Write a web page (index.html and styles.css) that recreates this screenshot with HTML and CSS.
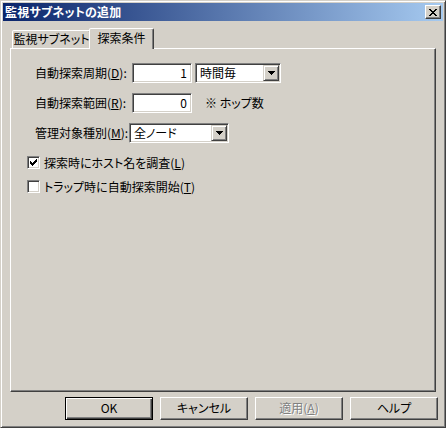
FILE: index.html
```html
<!DOCTYPE html>
<html lang="ja">
<head>
<meta charset="utf-8">
<title>監視サブネットの追加</title>
<link rel="stylesheet" href="styles.css">
</head>
<body>
<div class="window">
  <div class="titlebar">
    <span class="title">監視サブネットの追加</span>
    <div class="close">
      <svg width="8" height="7" viewBox="0 0 8 7" shape-rendering="crispEdges">
        <path d="M0 0h2v1h-2zM1 1h2v1h-2zM2 2h4v1h-4zM3 3h2v1h-2zM2 4h4v1h-4zM1 5h2v1h-2zM0 6h2v1h-2zM6 0h2v1h-2zM5 1h2v1h-2zM5 5h2v1h-2zM6 6h2v1h-2z" fill="#000"/>
      </svg>
    </div>
  </div>
  <div class="body">
    <div class="tabs">
      <div class="tab tab1">監視サブネット</div>
      <div class="tab tab2 active">探索条件</div>
    </div>
    <div class="panel">
      <div class="row">
        <span class="lbl lbl-a">自動探索周期(<u>D</u>):</span>
        <div class="edit">1</div>
        <div class="combo combo-a">
          <span class="combo-text">時間毎</span>
          <span class="arrow"><svg width="7" height="4" viewBox="0 0 7 4" shape-rendering="crispEdges"><path d="M0 0h7v1h-7zM1 1h5v1h-5zM2 2h3v1h-3zM3 3h1v1h-1z" fill="#000"/></svg></span>
        </div>
      </div>
      <div class="row">
        <span class="lbl lbl-a">自動探索範囲(<u>R</u>):</span>
        <div class="edit">0</div>
        <span class="note">※ ホップ数</span>
      </div>
      <div class="row">
        <span class="lbl lbl-b">管理対象種別(<u>M</u>):</span>
        <div class="combo combo-b">
          <span class="combo-text">全ノード</span>
          <span class="arrow"><svg width="7" height="4" viewBox="0 0 7 4" shape-rendering="crispEdges"><path d="M0 0h7v1h-7zM1 1h5v1h-5zM2 2h3v1h-3zM3 3h1v1h-1z" fill="#000"/></svg></span>
        </div>
      </div>
      <div class="check check1">
        <span class="cb"><svg width="7" height="7" viewBox="0 0 7 7" shape-rendering="crispEdges"><path d="M6 0h1v3h-1zM5 1h1v3h-1zM0 2h1v3h-1zM1 3h1v3h-1zM4 2h1v3h-1zM3 3h1v3h-1zM2 4h1v3h-1z" fill="#000"/></svg></span>
        <span class="ctext">探索時にホスト名を調査(<u>L</u>)</span>
      </div>
      <div class="check check2">
        <span class="cb"></span>
        <span class="ctext">トラップ時に自動探索開始(<u>T</u>)</span>
      </div>
    </div>
  </div>
  <div class="buttons">
    <div class="btn default">OK</div>
    <div class="btn">キャンセル</div>
    <div class="btn disabled">適用(<u>A</u>)</div>
    <div class="btn">ヘルプ</div>
  </div>
</div>
</body>
</html>
```
FILE: styles.css
```css
* { box-sizing: border-box; }
html, body { margin: 0; padding: 0; background: #D4D0C8; }
body {
  font-family: "Noto Sans CJK JP", "Noto Sans", sans-serif;
  font-size: 12px;
  color: #000;
  font-feature-settings: "palt";
}
u { text-decoration: underline; text-underline-offset: 1px; }

.window {
  width: 446px;
  height: 428px;
  background: #D4D0C8;
  border: 1px solid;
  border-color: #D4D0C8 #404040 #404040 #D4D0C8;
  box-shadow: inset 1px 1px #fff, inset -1px -1px #808080;
  padding: 2px;
  display: flex;
  flex-direction: column;
}

.titlebar {
  height: 18px;
  flex: none;
  background: linear-gradient(to right, #0A246A, #A6CAF0);
  display: flex;
  align-items: center;
  justify-content: space-between;
  padding: 0 2px;
}
.title {
  color: #fff;
  font-weight: bold;
  font-size: 12px;
  line-height: 18px;
  letter-spacing: 0.2px;
}
.close {
  width: 16px;
  height: 14px;
  background: #D4D0C8;
  border: 1px solid;
  border-color: #fff #404040 #404040 #fff;
  box-shadow: inset -1px -1px #808080;
  display: flex;
  align-items: center;
  justify-content: center;
}

.body {
  padding: 7px 7px 0 7px;
  flex: none;
}
.tabs {
  display: flex;
  align-items: flex-end;
  height: 20px;
  padding-left: 2px;
  position: relative;
  z-index: 1;
}
.tab {
  height: 18px;
  background: #D4D0C8;
  border: 1px solid;
  border-bottom: none;
  border-color: #fff #404040 transparent #fff;
  box-shadow: inset -1px 0 #808080;
  border-radius: 2px 2px 0 0;
  text-align: center;
  line-height: 16px;
  white-space: nowrap;
}
.tab1 { width: 79px; }
.tab2 {
  width: 65px;
  height: 21px;
  margin-left: -2px;
  margin-bottom: -1px;
  line-height: 17px;
  position: relative;
}

.panel {
  height: 344px;
  border: 1px solid;
  border-color: #fff #404040 #404040 #fff;
  box-shadow: inset -1px -1px #808080;
  padding: 14px 0 0 16px;
}
.row {
  display: flex;
  align-items: center;
  height: 20px;
  margin-left: 8px;
  margin-bottom: 10px;
}
.lbl { white-space: nowrap; line-height: 20px; }
.lbl-a { width: 97px; }
.lbl-b { width: 94px; }

.edit {
  width: 60px;
  height: 20px;
  background: #fff;
  border: 1px solid;
  border-color: #808080 #fff #fff #808080;
  box-shadow: inset 1px 1px #404040, inset -1px -1px #D4D0C8;
  text-align: right;
  padding-right: 4px;
  line-height: 18px;
}
.note { margin-left: 13px; line-height: 20px; }

.combo {
  height: 20px;
  background: #fff;
  border: 1px solid;
  border-color: #808080 #fff #fff #808080;
  box-shadow: inset 1px 1px #404040, inset -1px -1px #D4D0C8;
  padding: 1px;
  display: flex;
  align-items: center;
}
.combo-a { width: 86px; margin-left: 3px; }
.combo-b { width: 100px; }
.combo-text { flex: 1; padding-left: 3px; line-height: 16px; white-space: nowrap; }
.arrow {
  width: 16px;
  height: 16px;
  background: #D4D0C8;
  border: 1px solid;
  border-color: #D4D0C8 #404040 #404040 #D4D0C8;
  box-shadow: inset 1px 1px #fff, inset -1px -1px #808080;
  display: flex;
  align-items: center;
  justify-content: center;
}

.check {
  display: flex;
  align-items: center;
  height: 13px;
}
.check1 { margin-top: 13px; }
.check2 { margin-top: 11px; }
.cb {
  width: 13px;
  height: 13px;
  flex: none;
  background: #fff;
  border: 1px solid;
  border-color: #808080 #fff #fff #808080;
  box-shadow: inset 1px 1px #404040, inset -1px -1px #D4D0C8;
  padding: 2px 0 0 2px;
  display: flex;
}
.ctext { margin-left: 4px; line-height: 13px; white-space: nowrap; }

.buttons {
  display: flex;
  justify-content: flex-end;
  gap: 7px;
  margin-top: 5px;
  padding-right: 5px;
}
.btn {
  width: 88px;
  height: 23px;
  background: #D4D0C8;
  border: 1px solid;
  border-color: #fff #404040 #404040 #fff;
  box-shadow: inset -1px -1px #808080;
  text-align: center;
  line-height: 20px;
  white-space: nowrap;
}
.btn.default {
  border-color: #000;
  box-shadow: inset 1px 1px #fff, inset -1px -1px #404040, inset -2px -2px #808080;
}
.btn.disabled {
  color: #808080;
  text-shadow: 1px 1px #fff;
}
```
